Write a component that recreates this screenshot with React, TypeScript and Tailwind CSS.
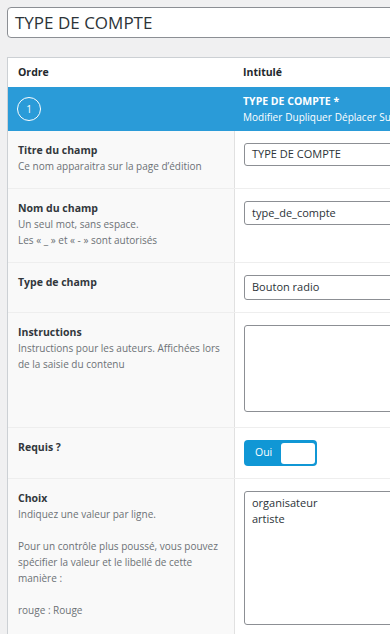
import React from 'react';

const font = { fontFamily: '"Open Sans", "Noto Sans", sans-serif' };

const Row = ({ h, label, desc, children }: { h: string; label: string; desc?: React.ReactNode; children: React.ReactNode }) => (
  <div className={`flex border-b border-[#eeeeee] ${h}`}>
    <div className="w-[227px] shrink-0 border-r border-[#e1e1e1] bg-[#f9f9f9] px-[10px] pt-[11px]">
      <div className="text-[10.5px] font-bold leading-[16px] text-[#32373c]">{label}</div>
      {desc && <div className="text-[10px] leading-[16px] text-[#6c7176]">{desc}</div>}
    </div>
    <div className="flex-1 bg-white pl-[9px] pt-[12px]">{children}</div>
  </div>
);

const Field = ({ value, h = 'h-[24px]' }: { value: string; h?: string }) => (
  <div className={`${h} w-[300px] rounded-[3px] border border-[#8c8f94] bg-white px-[7px] flex items-center text-[11px] text-[#2c3338]`}>
    {value}
  </div>
);

export default function App() {
  return (
    <div className="w-[390px] h-[634px] overflow-hidden bg-[#f0f0f1]" style={font}>
      <div className="w-[620px] pl-[7px] pt-[7px]">
        <div className="h-[31px] rounded-[4px] border border-[#8c8f94] bg-white pl-[7px] flex items-center text-[17px] text-[#2c3338]">
          TYPE DE COMPTE
        </div>

        <div className="mt-[19px] border-l border-t border-[#ccd0d4] bg-white">
          <div className="flex h-[29px] items-center text-[10.5px] font-bold text-[#23282d]">
            <div className="w-[227px] pl-[10px]">Ordre</div>
            <div className="pl-[8px]">Intitulé</div>
          </div>

          <div className="flex h-[44px] items-center bg-[#2a9bd8] text-white">
            <div className="w-[227px] pl-[9px]">
              <div className="flex h-[24px] w-[24px] items-center justify-center rounded-full border-[1.5px] border-white text-[10px]">
                1
              </div>
            </div>
            <div className="pl-[8px]">
              <div className="text-[10.5px] font-bold leading-[16px]">TYPE DE COMPTE *</div>
              <div className="flex gap-[3px] whitespace-nowrap text-[10px] leading-[16px]">
                <span>Modifier</span>
                <span>Dupliquer</span>
                <span>Déplacer</span>
                <span>Supprimer</span>
              </div>
            </div>
          </div>

          <Row h="h-[58px]" label="Titre du champ" desc="Ce nom apparaitra sur la page d’édition">
            <Field value="TYPE DE COMPTE" h="h-[23px]" />
          </Row>

          <Row
            h="h-[74px]"
            label="Nom du champ"
            desc={<>Un seul mot, sans espace.<br />Les « _ » et « - » sont autorisés</>}
          >
            <Field value="type_de_compte" />
          </Row>

          <Row h="h-[50px]" label="Type de champ">
            <Field value="Bouton radio" h="h-[25px]" />
          </Row>

          <Row
            h="h-[115px]"
            label="Instructions"
            desc={<>Instructions pour les auteurs. Affichées lors<br />de la saisie du contenu</>}
          >
            <div className="h-[87px] w-[300px] rounded-[3px] border border-[#8c8f94] bg-white" />
          </Row>

          <Row h="h-[51px]" label="Requis ?">
            <div className="flex h-[26px] w-[73px] items-center rounded-[4px] bg-[#1097d5] pl-[11px] pr-[2px]">
              <span className="text-[10.5px] text-white">Oui</span>
              <div className="ml-auto h-[21px] w-[34px] rounded-[3px] bg-white" />
            </div>
          </Row>

          <Row
            h="h-[200px]"
            label="Choix"
            desc={
              <>
                Indiquez une valeur par ligne.
                <br />
                <br />
                Pour un contrôle plus poussé, vous pouvez
                <br />
                spécifier la valeur et le libellé de cette
                <br />
                manière :
                <br />
                <br />
                rouge : Rouge
              </>
            }
          >
            <div className="h-[134px] w-[300px] rounded-[3px] border border-[#8c8f94] bg-white px-[7px] pt-[3px] text-[11px] leading-[16px] text-[#2c3338]">
              organisateur
              <br />
              artiste
            </div>
          </Row>
        </div>
      </div>
    </div>
  );
}
